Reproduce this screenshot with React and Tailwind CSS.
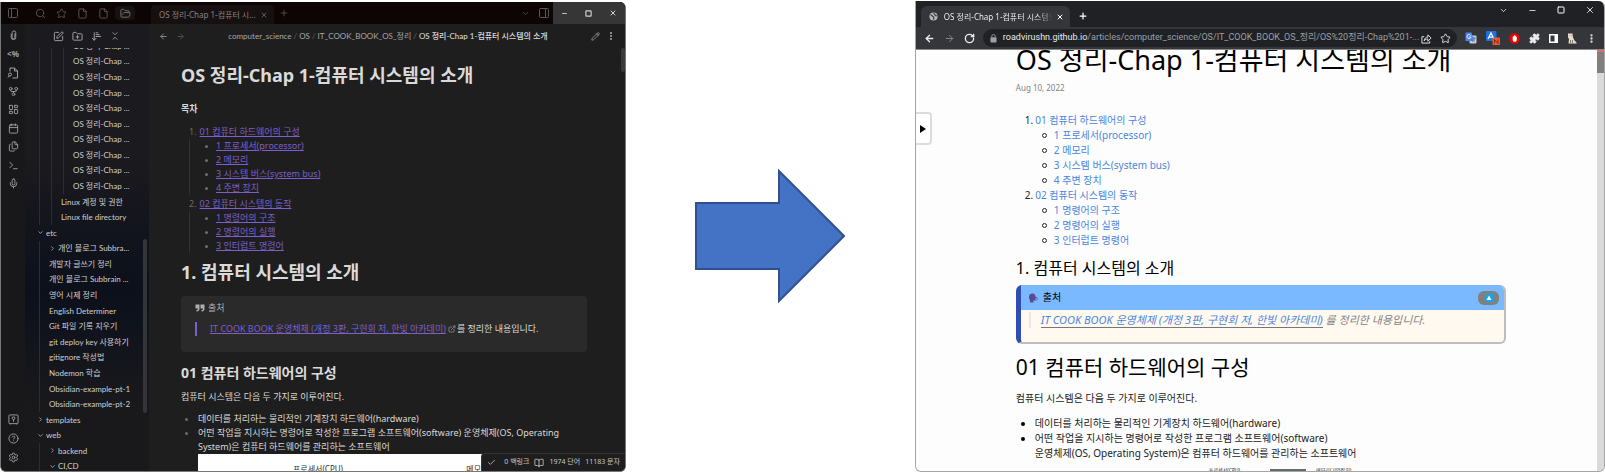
import React from "react";
import {
  PanelLeft, PanelRight, Search, Star, File, FolderOpen, X, Plus, ChevronDown, ChevronRight, Minus, Square,
  ArrowLeft, ArrowRight, Pencil, EllipsisVertical, SquarePen, FolderPlus, ArrowDownNarrowWide, ChevronsDownUp,
  GitFork, LayoutDashboard, Calendar, Files, Terminal, Mic, CircleQuestionMark, Settings, Check,
  BookOpen, ExternalLink, RotateCw, Puzzle,
} from "lucide-react";

const NOTO = "font-['Noto_Sans','Noto_Sans_CJK_KR',sans-serif]";
const LATO = "font-['Lato','Noto_Sans_CJK_KR',sans-serif]";
const ROBOTO = "font-['Roboto','Noto_Sans_CJK_KR',sans-serif]";

function IconButton({ label, className = "", children }) {
  return (
    <button type="button" aria-label={label} className={`flex shrink-0 items-center justify-center ${className}`}>
      {children}
    </button>
  );
}

const tree = [
  ...Array.from({ length: 10 }, () => ({ depth: 3, name: "OS 정리-Chap ..." })),
  { depth: 2, name: "Linux 계정 및 권한" },
  { depth: 2, name: "Linux file directory" },
  { depth: 0, name: "etc", icon: "open" },
  { depth: 1, name: "개인 블로그 Subbra...", icon: "closed" },
  { depth: 1, name: "개발자 글쓰기 정리" },
  { depth: 1, name: "개인 블로그 Subbrain ..." },
  { depth: 1, name: "영어 시제 정리" },
  { depth: 1, name: "English Determiner" },
  { depth: 1, name: "Git 파일 기록 지우기" },
  { depth: 1, name: "git deploy key 사용하기" },
  { depth: 1, name: "gitignore 작성법" },
  { depth: 1, name: "Nodemon 학습" },
  { depth: 1, name: "Obsidian-example-pt-1" },
  { depth: 1, name: "Obsidian-example-pt-2" },
  { depth: 0, name: "templates", icon: "closed" },
  { depth: 0, name: "web", icon: "open" },
  { depth: 1, name: "backend", icon: "closed" },
  { depth: 1, name: "CI,CD", icon: "open" },
];

function TreeRow({ depth, name, icon }) {
  const Chevron = icon === "open" ? ChevronDown : ChevronRight;
  return (
    <li className={`flex min-h-0 flex-1 items-stretch ${depth === 0 ? "pl-3" : "pl-[14px]"}`}>
      {Array.from({ length: depth }, (_, i) => (
        <span key={i} className={`shrink-0 border-l border-[#2c2c31] ${i === depth - 1 ? "w-[10px]" : "w-3"}`} />
      ))}
      <button type="button" className="flex items-center gap-[2px] whitespace-nowrap">
        {icon && <Chevron className="size-[7px] text-[#a0a0a0]" strokeWidth={3} />}
        {name}
      </button>
    </li>
  );
}

function ClipIcon() {
  return (
    <svg viewBox="0 0 24 24" className="size-[11px]" fill="none" stroke="currentColor" strokeWidth="2">
      <path d="M7 8v8a5 5 0 0 0 10 0V6a4 4 0 0 0-8 0v10a3 3 0 0 0 6 0V7" />
    </svg>
  );
}

function FileLensIcon() {
  return (
    <svg viewBox="0 0 24 24" className="size-3" fill="none" stroke="currentColor" strokeWidth="2">
      <path d="M6 9V2h9l6 6v14H11" />
      <path d="M15 2v6h6" />
      <circle cx="6" cy="15" r="3" />
      <path d="M2 21l2-3" />
    </svg>
  );
}

function VaultIcon() {
  return (
    <svg viewBox="0 0 24 24" className="size-[11px]" fill="none" stroke="currentColor" strokeWidth="2">
      <rect x="2" y="2" width="20" height="19" rx="2" />
      <circle cx="12" cy="9" r="3" />
      <path d="M12 12v5M5 21v2M19 21v2" />
    </svg>
  );
}

const ribbonTop = [
  ["Attachments", ClipIcon],
  ["Templates", null],
  ["Search in file", FileLensIcon],
  ["Graph view", GitFork],
  ["Canvas", LayoutDashboard],
  ["Daily note", Calendar],
  ["Copy files", Files],
  ["Command palette", Terminal],
  ["Record audio", Mic],
];

const toc = [
  ["01 컴퓨터 하드웨어의 구성", ["1 프로세서(processor)", "2 메모리", "3 시스템 버스(system bus)", "4 주변 장치"]],
  ["02 컴퓨터 시스템의 동작", ["1 명령어의 구조", "2 명령어의 실행", "3 인터럽트 명령어"]],
];

function NotesWindow() {
  return (
    <section className={`mt-[2px] flex w-[39%] shrink-0 flex-col overflow-hidden rounded-b-md rounded-tr-md border-x border-b border-[#77777a] bg-[#1e1e1e] text-[#dadada] ${NOTO}`}>
      <header className="flex h-[22px] shrink-0 items-center bg-[#0c0504] text-[#5c5757]">
        <div className="flex items-center gap-[10px] pl-[6px]">
          <IconButton label="Toggle left sidebar" className="mr-[6px]"><PanelLeft className="size-3" /></IconButton>
          <IconButton label="Search"><Search className="size-[11px]" /></IconButton>
          <IconButton label="Starred"><Star className="size-[11px]" /></IconButton>
          <IconButton label="New note"><File className="size-[11px]" /></IconButton>
          <IconButton label="Templates"><File className="size-[11px]" /></IconButton>
        </div>
        <IconButton label="Files" className="ml-[6px] h-[14px] w-5 rounded-sm bg-[#171212] text-[#777]"><FolderOpen className="size-[11px]" /></IconButton>
        <div className="ml-4 flex h-[19px] items-center gap-[4px] self-end rounded-t bg-[#161110] pr-[6px] pl-2 text-[8px] text-[#858080]">
          <span className="whitespace-nowrap">OS 정리-Chap 1-컴퓨터 시...</span>
          <IconButton label="Close tab"><X className="size-2" /></IconButton>
        </div>
        <IconButton label="New tab" className="ml-[5px]"><Plus className="size-[10px]" /></IconButton>
        <div className="ml-auto flex h-full items-center">
          <IconButton label="Tab list" className="mr-[8px]"><ChevronDown className="size-[9px]" /></IconButton>
          <IconButton label="Toggle right sidebar" className="mr-[3px]"><PanelRight className="size-3" /></IconButton>
          <div className="flex h-full items-center bg-[#363636] text-[#d0d0d0]">
            <IconButton label="Minimize" className="w-6"><Minus className="size-[7px]" strokeWidth={3} /></IconButton>
            <IconButton label="Maximize" className="w-6"><Square className="size-[7px]" strokeWidth={4} /></IconButton>
            <IconButton label="Close" className="w-6"><X className="size-2" strokeWidth={3} /></IconButton>
          </div>
        </div>
      </header>
      <div className="flex min-h-0 flex-1">
        <nav aria-label="Ribbon" className="flex w-6 shrink-0 flex-col items-center justify-between bg-[#18181b] pt-[2px] pb-[5px] text-[#a0a0a0]">
          <div className="flex flex-col items-center">
            {ribbonTop.map(([label, Icon], i) => (
              <IconButton key={label} label={label} className={i % 2 ? "h-[18px] w-6" : "h-[19px] w-6"}>
                {Icon ? <Icon className="size-[11px]" /> : <span className="text-[8px] font-bold">&lt;%</span>}
              </IconButton>
            ))}
          </div>
          <div className="flex flex-col items-center">
            <IconButton label="Open another vault" className="h-[19px] w-6"><VaultIcon /></IconButton>
            <IconButton label="Help" className="h-[19px] w-6"><CircleQuestionMark className="size-[11px]" /></IconButton>
            <IconButton label="Settings" className="h-[18px] w-6"><Settings className="size-[11px]" /></IconButton>
          </div>
        </nav>
        <aside className="relative flex w-[124px] shrink-0 flex-col bg-linear-to-b from-[#1b1a1e] from-30% via-[#0b101b] via-60% to-[#19191c] to-85%">
          <div className="flex h-6 shrink-0 items-center gap-2 pl-[28px] text-[#a8a8a8]">
            <IconButton label="New note"><SquarePen className="size-[11px]" /></IconButton>
            <IconButton label="New folder"><FolderPlus className="size-[11px]" /></IconButton>
            <IconButton label="Sort order"><ArrowDownNarrowWide className="size-[11px]" /></IconButton>
            <IconButton label="Collapse all"><ChevronsDownUp className="size-[10px]" /></IconButton>
          </div>
          <div className="flex min-h-0 flex-1 flex-col overflow-hidden">
            <ul className={`-mt-[10px] -mb-[3px] flex flex-1 flex-col text-[8px] leading-[12px] text-[#cfcfcf] ${LATO}`}>
              {tree.map((row, i) => <TreeRow key={i} {...row} />)}
            </ul>
          </div>
          <span className="absolute top-[48%] right-[2px] h-[39%] w-1 rounded-full bg-[#34353a]" />
        </aside>
        <main className="relative flex min-w-0 flex-1 flex-col">
          <div className="flex h-6 shrink-0 items-center pr-[9px] pl-[10px] text-[8px] text-[#a8a8a8]">
            <IconButton label="Back"><ArrowLeft className="size-[9px]" /></IconButton>
            <IconButton label="Forward" className="ml-2 text-[#5c5c5c]"><ArrowRight className="size-[9px]" /></IconButton>
            <div className={`flex flex-1 justify-center gap-[2px] whitespace-nowrap ${LATO}`}>
              <span>computer_science</span><span className="text-[#666]">/</span>
              <span>OS</span><span className="text-[#666]">/</span>
              <span>IT_COOK_BOOK_OS_정리</span><span className="text-[#666]">/</span>
              <span className="font-medium text-[#dadada]">OS 정리-Chap 1-컴퓨터 시스템의 소개</span>
            </div>
            <IconButton label="Edit"><Pencil className="size-[9px]" /></IconButton>
            <IconButton label="More options" className="ml-[6px]"><EllipsisVertical className="size-[10px]" strokeWidth={3} /></IconButton>
          </div>
          <span className="absolute top-6 right-0 h-6 w-1 rounded-full bg-[#3a3a3a]" />
          <article className="min-h-0 flex-1 overflow-hidden pr-[38px] pl-8 text-[9px] leading-[14px]">
            <h1 className="mt-[14px] text-[18px] leading-[26px] font-bold">OS 정리-Chap 1-컴퓨터 시스템의 소개</h1>
            <p className="mt-[14px] font-bold">목차</p>
            <ol className="mt-[9px] flex flex-col gap-[2px] pl-[8px]">
              {toc.map(([head, subs], i) => (
                <li key={head}>
                  <div className="flex gap-[3px]">
                    <span className="text-[#6c6c6c]">{i + 1}.</span>
                    <a href="#" className="text-[#7c5fcb] underline">{head}</a>
                  </div>
                  <ul className="border-l border-[#333] pl-[15px]">
                    {subs.map((s) => (
                      <li key={s} className="flex items-center">
                        <span className="mr-2 size-[3px] rounded-full bg-[#6c6c6c]" />
                        <a href="#" className="text-[#7c5fcb] underline">{s}</a>
                      </li>
                    ))}
                  </ul>
                </li>
              ))}
            </ol>
            <h1 className="mt-[6px] text-[18px] leading-[26px] font-bold">1. 컴퓨터 시스템의 소개</h1>
            <div className="mt-[11px] rounded-sm bg-[#2a2a2a] px-[14px] pt-[5px] pb-4">
              <p className="flex items-center gap-[3px] text-[#b0b0b0]">
                <svg viewBox="0 0 20 16" className="h-2 w-[10px]" fill="currentColor">
                  <path d="M1 1h8v8c0 4-2 6-6 6v-3c2 0 3-1 3-3H1zM11 1h8v8c0 4-2 6-6 6v-3c2 0 3-1 3-3h-5z" />
                </svg>
                출처
              </p>
              <blockquote className="mt-[7px] flex items-center border-l-2 border-[#7c5fcb] pl-[13px] whitespace-nowrap">
                <a href="#" className="text-[#7c5fcb] underline">IT COOK BOOK 운영체제 (개정 3판, 구현회 저, 한빛 아카데미)</a>
                <ExternalLink className="mr-px ml-[2px] size-2 text-[#a0a0a0]" />
                <span>를 정리한 내용입니다.</span>
              </blockquote>
            </div>
            <h2 className="mt-[11px] text-[14px] leading-5 font-bold">01 컴퓨터 하드웨어의 구성</h2>
            <p className="mt-[7px]">컴퓨터 시스템은 다음 두 가지로 이루어진다.</p>
            <ul className="mt-2 list-disc pl-[17px] marker:text-[#6c6c6c]">
              <li>데이터를 처리하는 물리적인 기계장치 하드웨어(hardware)</li>
              <li>어떤 작업을 지시하는 명령어로 작성한 프로그램 소프트웨어(software) 운영체제(OS, Operating System)은 컴퓨터 하드웨어를 관리하는 소프트웨어</li>
            </ul>
            <figure className="ml-[17px] flex bg-white pt-2 text-[8px] text-[#333]">
              <span className="w-[60%] pl-[95px]">프로세서(CPU)</span>
              <span className="pl-[35px]">메모리</span>
            </figure>
          </article>
          <footer className="absolute right-0 bottom-0 flex h-[18px] items-center rounded-tl border-t border-l border-[#333] bg-[#1e1e1e] px-[5px] text-[7px] whitespace-nowrap text-[#c8c8c8]">
            <Check className="mr-2 size-[9px]" />
            <span>0 백링크</span>
            <BookOpen className="mx-[5px] size-[10px]" />
            <span className="mr-[5px]">1974 단어</span>
            <span>11183 문자</span>
          </footer>
        </main>
      </div>
    </section>
  );
}

function Extensions() {
  return (
    <div className="flex items-center gap-[9px]">
      <IconButton label="Translate">
        <svg viewBox="0 0 24 24" className="size-3">
          <rect x="9" y="7" width="14" height="16" rx="2" fill="#c9ccd1" />
          <path d="M13 12h8M17 10v2M20 12c-1 4-4 6-6 7M15 14c1 2 3 4 5 5" stroke="#55606e" strokeWidth="1.6" fill="none" />
          <path d="M2 1h11l5 17H2a1 1 0 0 1-1-1V2a1 1 0 0 1 1-1z" fill="#4a86ee" />
          <path d="M11.500 7A4 4 0 1 0 12 10H8.500" stroke="#fff" strokeWidth="1.800" fill="none" />
        </svg>
      </IconButton>
      <IconButton label="Adblock">
        <svg viewBox="0 0 28 28" className="size-[14px]">
          <rect x="0" y="0" width="21" height="20" rx="2" fill="#1a6fe8" />
          <path d="M4 16l6-12 6 12M7 12h7" stroke="#fff" strokeWidth="2.500" fill="none" />
          <rect x="13" y="13" width="15" height="15" rx="2" fill="#f0592a" />
          <path d="M17 25v-8l7 8v-8" stroke="#7a2410" strokeWidth="1.800" fill="none" />
        </svg>
      </IconButton>
      <IconButton label="Blocker">
        <svg viewBox="0 0 24 24" className="size-[11px]">
          <path d="M7 1h10l6 6v10l-6 6H7l-6-6V7z" fill="#f00000" />
          <path d="M8 8v6c0 3 2 5 4.500 5S17 17 17 14V8h-2V6h-2V5h-2v2H9v1z" fill="#fff" />
        </svg>
      </IconButton>
      <IconButton label="Extensions"><Puzzle className="size-[11px] fill-[#e8eaed]" /></IconButton>
      <IconButton label="Side panel">
        <svg viewBox="0 0 18 18" className="size-[9px]">
          <rect x="1.500" y="1.500" width="15" height="15" fill="none" stroke="#fff" strokeWidth="3" />
          <rect x="11" y="2" width="6" height="14" fill="#fff" />
        </svg>
      </IconButton>
      <IconButton label="Profile">
        <svg viewBox="0 0 20 22" className="h-[11px] w-[10px]">
          <path d="M2 1h9l1 8 3 6 4 4v2H3l1-9-2-3z" fill="#e6dccb" />
          <path d="M5 5h1M9 5h1M7 14v6M11 14v6" stroke="#6b5a48" strokeWidth="1.500" />
        </svg>
      </IconButton>
      <IconButton label="Menu"><EllipsisVertical className="size-[11px]" strokeWidth={3} /></IconButton>
    </div>
  );
}

function BrowserWindow() {
  return (
    <section className={`mt-px flex w-[43%] shrink-0 flex-col overflow-hidden rounded-b-md rounded-tr-md border-x border-b border-[#a5a5a5] bg-[#fdfdfd] text-[#222] ${NOTO}`}>
      <header className="flex h-[26px] shrink-0 items-end bg-[#202124] text-white">
        <div className="ml-[5px] flex h-[21px] w-[149px] items-center rounded-t-md bg-[#35363a] pr-[6px] pl-2 text-[8px]">
          <svg viewBox="0 0 20 20" className="mr-[6px] size-[9px] shrink-0">
            <circle cx="10" cy="10" r="9" fill="#b5b8bd" />
            <path d="M3 6c4 0 3 3 6 4s2 4 1 7M11 2c-1 3 2 3 3 5s3 1 4 2" stroke="#35363a" strokeWidth="2.500" fill="none" />
          </svg>
          <span className="min-w-0 flex-1 overflow-hidden bg-linear-to-r from-white from-85% to-transparent bg-clip-text whitespace-nowrap text-transparent">OS 정리-Chap 1-컴퓨터 시스템의</span>
          <IconButton label="Close tab" className="ml-[3px]"><X className="size-2" strokeWidth={3} /></IconButton>
        </div>
        <IconButton label="New tab" className="mb-[6px] ml-2"><Plus className="size-[10px]" strokeWidth={3} /></IconButton>
        <div className="mb-[12px] ml-auto flex items-center gap-5 pr-[9px]">
          <IconButton label="Search tabs"><ChevronDown className="size-[9px]" /></IconButton>
          <IconButton label="Minimize"><Minus className="size-[9px]" /></IconButton>
          <IconButton label="Maximize"><Square className="size-[8px]" strokeWidth={3} /></IconButton>
          <IconButton label="Close"><X className="size-[10px]" /></IconButton>
        </div>
      </header>
      <div className="flex h-[22px] shrink-0 items-center bg-[#35363a] pr-[7px] pl-2 text-[#e8eaed]">
        <IconButton label="Back"><ArrowLeft className="size-[11px]" strokeWidth={3} /></IconButton>
        <IconButton label="Forward" className="ml-[9px] text-[#8b8c90]"><ArrowRight className="size-[11px]" /></IconButton>
        <IconButton label="Reload" className="ml-[9px]"><RotateCw className="size-[11px]" strokeWidth={3} /></IconButton>
        <div className={`mr-2 ml-[8px] flex h-[18px] min-w-0 flex-1 items-center rounded-full bg-[#202124] pr-[6px] pl-[7px] text-[9px] ${ROBOTO}`}>
          <svg viewBox="0 0 16 20" className="h-[9px] w-[7px] shrink-0">
            <rect x="1" y="7" width="14" height="12" rx="2" fill="#9aa0a6" />
            <path d="M4 8V5a4 4 0 0 1 8 0v3" stroke="#9aa0a6" strokeWidth="2" fill="none" />
          </svg>
          <label htmlFor="path" className="ml-[6px]">roadvirushn.github.io</label>
          <input id="path" className="min-w-0 flex-1 bg-transparent text-[#9aa0a6] outline-none" defaultValue="/articles/computer_science/OS/IT_COOK_BOOK_OS_정리/OS%20정리-Chap%201-..." />
          <IconButton label="Share">
            <svg viewBox="0 0 24 24" className="size-[11px]" fill="none" stroke="currentColor" strokeWidth="2">
              <path d="M7 8H2v14h17v-4M7 17c1-6 4-8 8-8V4l7 7-7 7v-5c-4 0-6 1-8 4z" />
            </svg>
          </IconButton>
          <IconButton label="Bookmark" className="ml-2"><Star className="size-[11px]" /></IconButton>
        </div>
        <Extensions />
      </div>
      <div className="relative flex min-h-0 flex-1 border-t border-[#8a8a8a]">
        <button type="button" aria-label="Open navigation" className="absolute top-[62px] left-0 flex h-[33px] w-4 items-center justify-center rounded-r-sm border-2 border-l-0 border-[#dcdcdc] bg-white">
          <svg viewBox="0 0 6 8" className="h-2 w-[6px]"><path d="M0 0l6 4-6 4z" fill="#000" /></svg>
        </button>
        <article className="min-w-0 flex-1 overflow-hidden pr-[91px] pl-[100px] text-[10px] leading-[15px]">
          <h1 className="-mt-[10px] text-[27px] leading-10 whitespace-nowrap text-black">OS 정리-Chap 1-컴퓨터 시스템의 소개</h1>
          <time className="mt-[2px] block text-[8px] leading-3 text-[#828282]">Aug 10, 2022</time>
          <ol className="mt-[19px] pl-[9px]">
            {toc.map(([head, subs], i) => (
              <li key={head}>
                <div className="flex gap-[2px]">
                  <span>{i + 1}.</span>
                  <a href="#" className="text-[#4a86e0]">{head}</a>
                </div>
                <ul className="pl-[17px]">
                  {subs.map((s) => (
                    <li key={s} className="flex items-center">
                      <span className="mr-[7px] size-[5px] rounded-full border border-[#222]" />
                      <a href="#" className="text-[#4a86e0]">{s}</a>
                    </li>
                  ))}
                </ul>
              </li>
            ))}
          </ol>
          <h2 className="mt-2 text-[16px] leading-6 text-black">1. 컴퓨터 시스템의 소개</h2>
          <div className="mt-[5px] overflow-hidden rounded-md border-r-2 border-b-2 border-l-[5px] border-r-[#bdbdbd] border-b-[#bdbdbd] border-l-[#2f4eb0] bg-[#fff9ef]">
            <div className="flex h-[25px] items-center bg-[#7ab8ff] pr-[5px] pl-[7px] text-black">
              <svg viewBox="0 0 20 20" className="mr-[5px] size-[10px]">
                <path d="M2 8c0-5 3-7 7-7s6 3 6 6l2 3-2 1v4h-4v4H4v-5c-1-1-2-3-2-6z" fill="#5b4a8f" />
                <path d="M17 8c2 2 2 5 0 7" stroke="#5b4a8f" strokeWidth="1.500" fill="none" />
              </svg>
              출처
              <button type="button" aria-label="Collapse" className="ml-auto flex h-[14px] w-[21px] items-center justify-center rounded-md bg-[#808080]">
                <svg viewBox="0 0 16 16" className="size-2"><rect width="16" height="16" rx="2" fill="#12a5f0" /><path d="M8 3l5 9H3z" fill="#fff" /></svg>
              </button>
            </div>
            <blockquote className="mt-[2px] mb-[14px] ml-2 border-l-2 border-[#e8e8e8] pl-[10px] text-[11px] leading-4 whitespace-nowrap text-[#828282] italic">
              <a href="#" className="border-b border-[#777] text-[#4a86e0]">IT COOK BOOK 운영체제 (개정 3판, 구현회 저, 한빛 아카데미)</a> 를 정리한 내용입니다.
            </blockquote>
          </div>
          <h1 className="mt-[7px] text-[21px] leading-8 text-black">01 컴퓨터 하드웨어의 구성</h1>
          <p className="mt-2">컴퓨터 시스템은 다음 두 가지로 이루어진다.</p>
          <ul className="mt-[10px] list-disc pl-[19px] marker:text-black">
            <li>데이터를 처리하는 물리적인 기계장치 하드웨어(hardware)</li>
            <li>어떤 작업을 지시하는 명령어로 작성한 프로그램 소프트웨어(software)<br />운영체제(OS, Operating System)은 컴퓨터 하드웨어를 관리하는 소프트웨어</li>
          </ul>
          <figure className="mt-[5px] ml-[19px] flex items-start pl-[174px] text-[5px] leading-[8px]">
            <span>프로세서(CPU)</span>
            <span className="mt-[3px] ml-[30px] h-4 w-9 bg-[#5d6f70]" />
            <span className="ml-[10px]">메모리(기억장치)</span>
          </figure>
        </article>
        <div className="w-[7px] shrink-0 border-t-2 border-[#f06464] bg-[#dadada]">
          <div className="h-[21px] bg-[#808080]" />
        </div>
      </div>
    </section>
  );
}

export default function App() {
  return (
    <div className="flex h-screen overflow-hidden bg-white pb-px">
      <NotesWindow />
      <div className="flex flex-1 items-center justify-center">
        <svg viewBox="0 0 150 134" className="h-[134px] w-[150px]" aria-label="Converts to">
          <path d="M1 34H84V2L149 67L84 132V100H1Z" fill="#4472c4" stroke="#2f528f" strokeWidth="2" />
        </svg>
      </div>
      <BrowserWindow />
    </div>
  );
}
